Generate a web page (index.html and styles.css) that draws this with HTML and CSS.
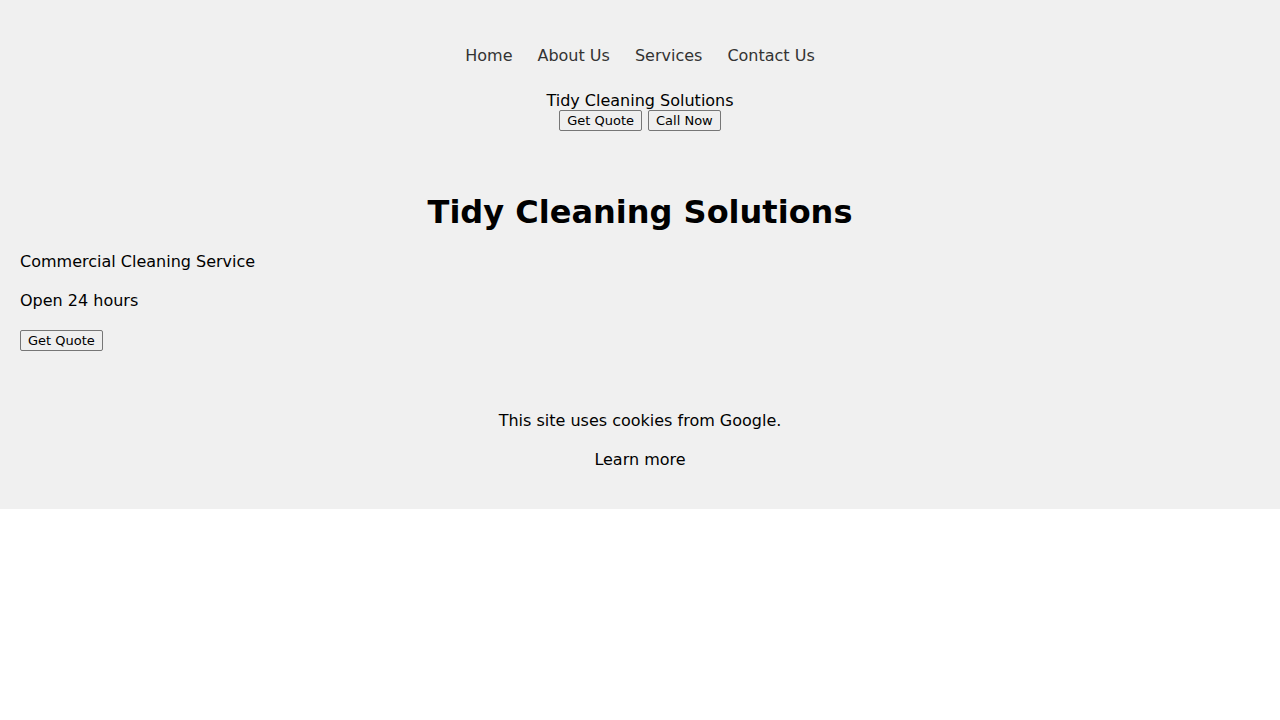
FILE: index.html
```html
<!DOCTYPE html>
<html lang="en">
<head>
<meta charset="utf-8">
<title>Tidy Cleaning Solutions</title>
<link rel="stylesheet" href="styles.css">
</head>
<body>
<div class="page">
  <header class="site-header">
    <nav class="nav">
      <ul class="nav-list">
        <li><a class="nav-link" href="#">Home</a></li>
        <li><a class="nav-link" href="#">About Us</a></li>
        <li><a class="nav-link" href="#">Services</a></li>
        <li><a class="nav-link" href="#">Contact Us</a></li>
      </ul>
    </nav>
    <div class="brand">Tidy Cleaning Solutions</div>
    <div class="header-actions">
      <button class="btn">Get Quote</button>
      <button class="btn">Call Now</button>
    </div>
  </header>
  <section class="hero">
    <h1 class="hero-title">Tidy Cleaning Solutions</h1>
    <p class="text">Commercial Cleaning Service</p>
    <p class="text">Open 24 hours</p>
    <div class="hero-actions"><button class="btn">Get Quote</button></div>
  </section>
  <footer class="cookies">
    <p class="text">This site uses cookies from Google.</p>
    <p class="text">Learn more</p>
  </footer>
</div>
</body>
</html>
```
FILE: styles.css
```css
html, body {
  margin: 0;
  padding: 0;
  background: #ffffff;
}
body {
  font-family: "DejaVu Sans", sans-serif;
  font-size: 16px;
  color: #000;
}
.page {
  background: #f0f0f0;
}
.site-header {
  padding: 20px;
  text-align: center;
}
.nav-list {
  list-style: none;
  margin: 16px 0;
  padding: 0;
  display: flex;
  justify-content: center;
  gap: 5px;
}
.nav-link {
  display: block;
  padding: 10px;
  color: #333;
  text-decoration: none;
  line-height: 19px;
}
.brand {
  line-height: 19px;
}
.header-actions {
  display: flex;
  justify-content: center;
  gap: 6px;
  height: 21px;
}
.btn {
  appearance: none;
  box-sizing: border-box;
  height: 21px;
  margin: 0;
  padding: 0 7px;
  border: 1px solid #767676;
  border-radius: 2px;
  background: #efefef;
  color: #000;
  font-family: "DejaVu Sans", sans-serif;
  font-size: 13px;
  line-height: 19px;
  vertical-align: top;
}
.hero {
  padding: 22px 20px 20px;
}
.hero-title {
  text-align: center;
  font-size: 32px;
  font-weight: bold;
  line-height: 37px;
  margin: 21px 0;
}
.text {
  margin: 20px 0;
  line-height: 19px;
}
.hero-actions {
  display: flex;
  height: 21px;
}
.cookies {
  padding: 20px;
  text-align: center;
  display: flow-root;
}
```
